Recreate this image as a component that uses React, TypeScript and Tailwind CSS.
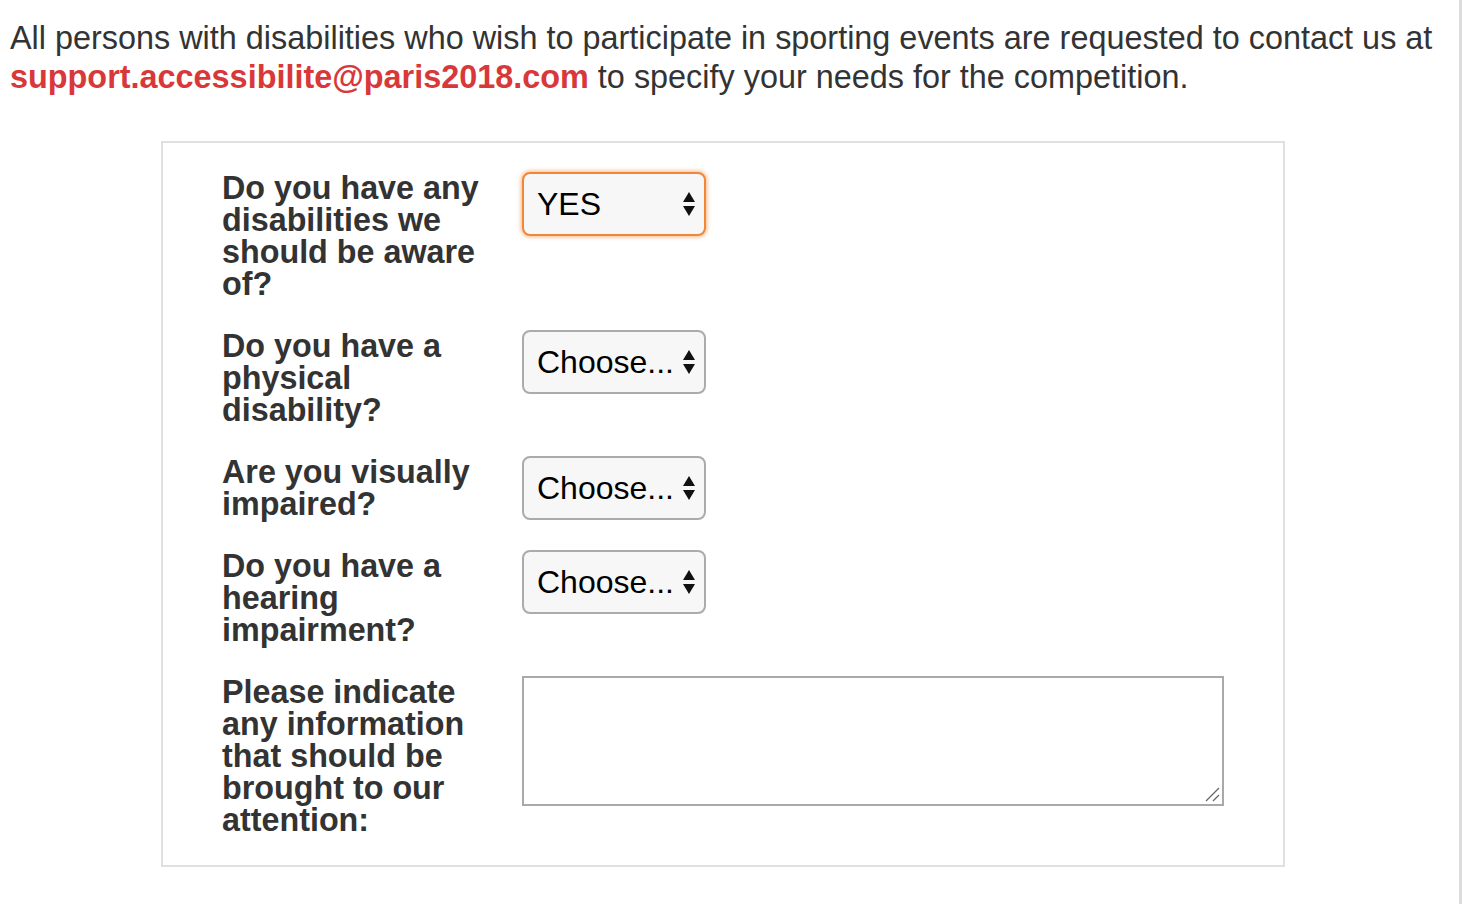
import React, { useState } from 'react';

const Arrows = () => (
  <svg className="pointer-events-none absolute right-[10px] top-1/2 -translate-y-1/2" width="14" height="28" viewBox="0 0 14 28">
    <path d="M7 2 L13 12 L1 12 Z" fill="#111" />
    <path d="M1 16 L13 16 L7 26 Z" fill="#111" />
  </svg>
);

const Choice: React.FC<{ value: string; focused?: boolean }> = ({ value, focused }) => {
  const [v, setV] = useState(value);
  return (
    <div className="relative w-[184px]">
      <select
        value={v}
        onChange={e => setV(e.target.value)}
        className={`w-full h-[64px] appearance-none rounded-[8px] bg-[#f7f7f7] pl-[13px] pr-[26px] text-[32px] text-black outline-none ${focused ? 'border-2 border-[#f0883a] shadow-[0_0_4px_1px_rgba(240,136,58,0.6)]' : 'border-2 border-[#ababab]'}`}
      >
        <option value="Choose...">Choose...</option>
        <option value="YES">YES</option>
        <option value="NO">NO</option>
      </select>
      <Arrows />
    </div>
  );
};

const rows = [
  { label: 'Do you have any disabilities we should be aware of?', value: 'YES', focused: true },
  { label: 'Do you have a physical disability?', value: 'Choose...' },
  { label: 'Are you visually impaired?', value: 'Choose...' },
  { label: 'Do you have a hearing impairment?', value: 'Choose...' },
];

export default function App() {
  return (
    <div className="flex min-h-[904px] bg-white font-['Liberation_Sans',Arial,sans-serif] text-[#333]">
      <div className="flex-1 border-r-[3px] border-[#dcdcdc]">
        <p className="pl-[10px] pr-[12px] pt-[19px] text-[32.4px] leading-[39px]">
          All persons with disabilities who wish to participate in sporting events are requested to contact us at{' '}
          <a href="#" className="font-bold text-[#d9383a]">support.accessibilite@paris2018.com</a> to specify your needs for the competition.
        </p>

        <div className="ml-[161px] mt-[44px] w-[1124px] border-2 border-[#e0e0e0] pl-[59px] pr-[60px] pt-[29px] pb-[29px]">
          <div className="flex flex-col gap-[30px]">
            {rows.map(r => (
              <div key={r.label} className="flex items-start gap-[38px]">
                <label className="w-[262px] shrink-0 text-[32.3px] font-bold leading-[32px]">{r.label}</label>
                <Choice value={r.value} focused={r.focused} />
              </div>
            ))}
            <div className="flex items-start gap-[38px]">
              <label className="w-[262px] shrink-0 text-[32.3px] font-bold leading-[32px]">
                Please indicate any information that should be brought to our attention:
              </label>
              <div className="relative">
                <textarea className="block h-[130px] w-[702px] resize-none border-2 border-[#a9a9a9] bg-white outline-none" />
                <svg className="pointer-events-none absolute bottom-[4px] right-[4px]" width="15" height="15" viewBox="0 0 15 15">
                  <path d="M1 14 L14 1" stroke="#666" strokeWidth="1.3" />
                  <path d="M8 14 L14 8" stroke="#666" strokeWidth="1.3" />
                </svg>
              </div>
            </div>
          </div>
        </div>
      </div>
    </div>
  );
}
